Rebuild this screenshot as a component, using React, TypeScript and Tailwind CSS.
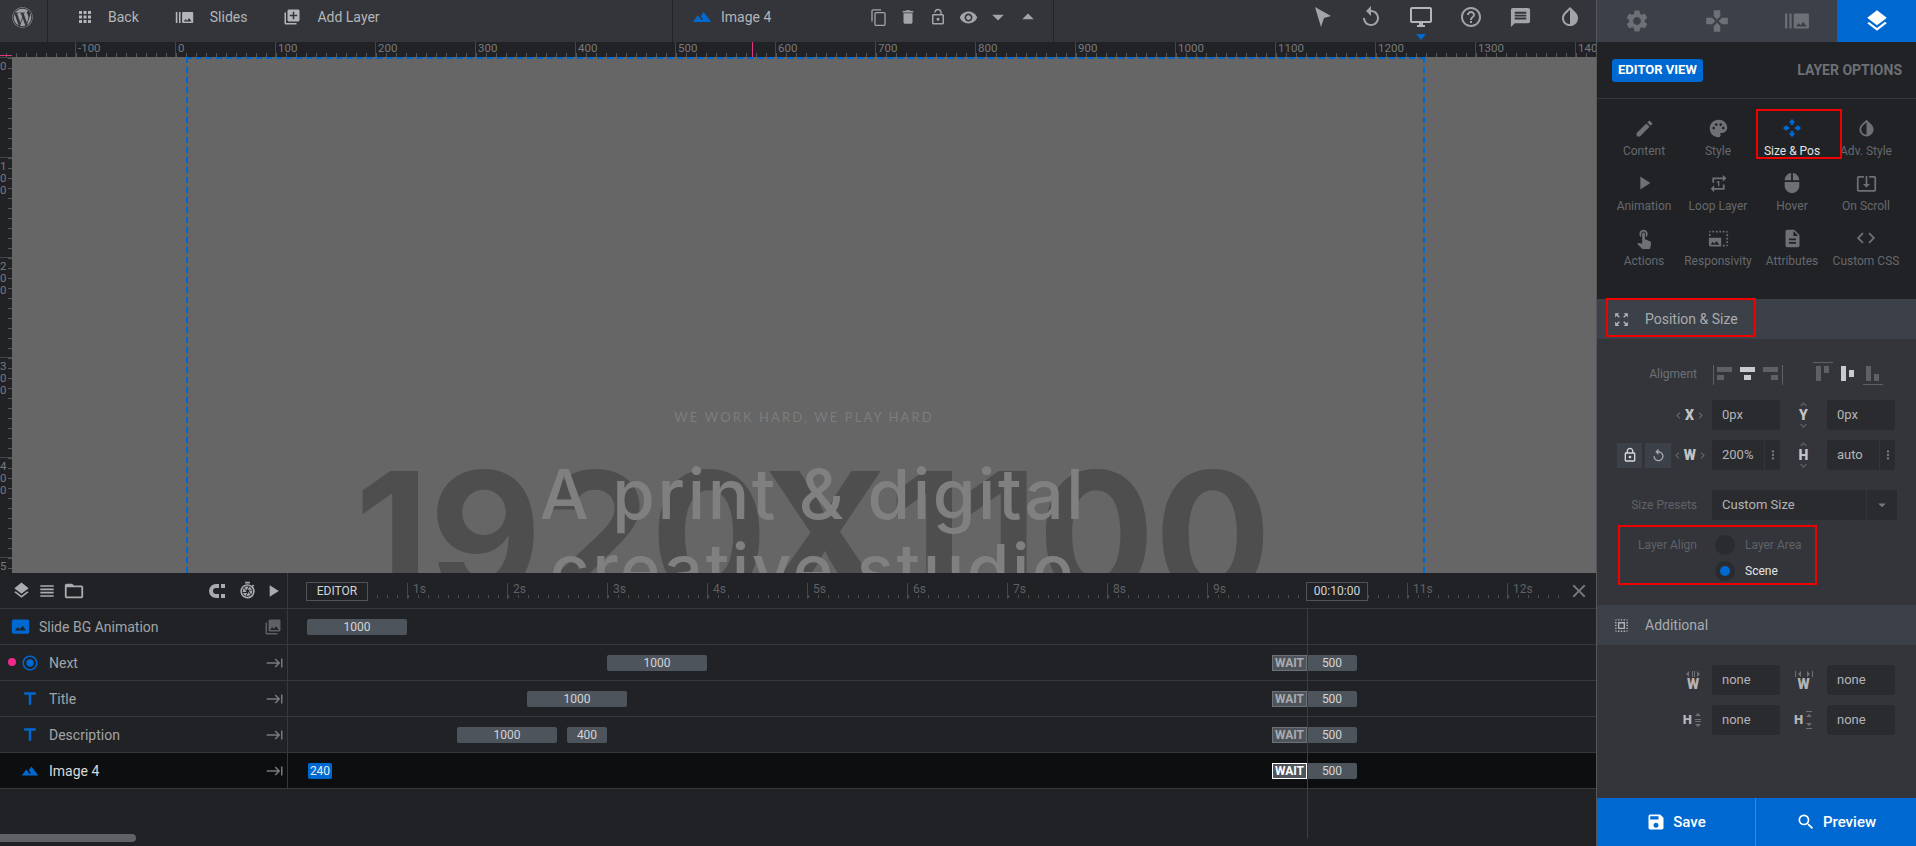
import type { ReactNode } from "react";
import { FaWordpress } from "react-icons/fa";
import {
  MdApps,
  MdBurstMode,
  MdClose,
  MdCode,
  MdDelete,
  MdDescription,
  MdOutlineDesktopWindows,
  MdEdit,
  MdFolderOpen,
  MdGames,
  MdHelpOutline,
  MdInvertColors,
  MdKeyboardArrowDown,
  MdKeyboardArrowLeft,
  MdKeyboardArrowRight,
  MdKeyboardArrowUp,
  MdKeyboardTab,
  MdLandscape,
  MdLayers,
  MdLibraryAdd,
  MdLockOpen,
  MdLockOutline,
  MdMessage,
  MdMouse,
  MdPalette,
  MdPhotoLibrary,
  MdPhotoSizeSelectActual,
  MdPhotoSizeSelectLarge,
  MdPlayArrow,
  MdRadioButtonChecked,
  MdRepeatOne,
  MdReplay,
  MdSave,
  MdSearch,
  MdSelectAll,
  MdSettings,
  MdShutterSpeed,
  MdSystemUpdateAlt,
  MdTitle,
  MdTouchApp,
  MdViewHeadline,
  MdVisibility,
  MdZoomOutMap,
  MdArrowDropDown,
  MdArrowDropUp,
  MdMoreVert,
} from "react-icons/md";

// small hand drawn icons the packs don't have
const CopyIcon = () => (
  <svg width="15" height="17" viewBox="0 0 15 17" fill="none" stroke="currentColor" strokeWidth="1.3">
    <path d="M1 12.5V2a1.2 1.2 0 0 1 1.2-1.2H10" />
    <rect x="4" y="3.6" width="10" height="12.8" rx="1.2" />
  </svg>
);

const CursorIcon = () => (
  <svg width="20" height="24" viewBox="0 0 20 24" fill="currentColor">
    <path d="M2 2 18 11 11 13 8 22Z" />
  </svg>
);

const MagnetIcon = () => (
  <svg width="18" height="16" viewBox="0 0 18 16" fill="currentColor">
    <path d="M8 1h3v4H8a3 3 0 0 0 0 6h3v4H8A7 7 0 0 1 8 1Z" />
    <rect x="13" y="1" width="4" height="4" />
    <rect x="13" y="11" width="4" height="4" />
  </svg>
);

const SizePosIcon = () => (
  <svg width="20" height="20" viewBox="0 0 20 20" fill="currentColor">
    <path d="M10 1 13.5 4.5H11.5V7H8.5V4.5H6.5Z" />
    <path d="M10 19 6.5 15.5H8.5V13H11.5V15.5H13.5Z" />
    <path d="M1 10 4.5 6.5V8.5H7V11.5H4.5V13.5Z" />
    <path d="M19 10 15.5 13.5V11.5H13V8.5H15.5V6.5Z" />
  </svg>
);

const AlignIcons = () => (
  <svg width="70" height="22" viewBox="0 0 70 22" fill="#5d6064">
    <rect x="0" y="2" width="1" height="20" />
    <rect x="4" y="4" width="15" height="5" />
    <rect x="4" y="12" width="7" height="5" />
    <rect x="27" y="4" width="15" height="5" fill="#c9cacc" />
    <rect x="31" y="12" width="7" height="5" fill="#c9cacc" />
    <rect x="50" y="4" width="15" height="5" />
    <rect x="58" y="12" width="7" height="5" />
    <rect x="69" y="2" width="1" height="20" />
  </svg>
);

const VAlignIcons = () => (
  <svg width="70" height="26" viewBox="0 0 70 26" fill="#5d6064">
    <rect x="0" y="0" width="20" height="1" />
    <rect x="3" y="4" width="5" height="15" />
    <rect x="11" y="4" width="5" height="7" />
    <rect x="28" y="4" width="5" height="15" fill="#c9cacc" />
    <rect x="36" y="8" width="5" height="7" fill="#c9cacc" />
    <rect x="53" y="4" width="5" height="15" />
    <rect x="61" y="12" width="5" height="7" />
    <rect x="50" y="22" width="20" height="1" />
  </svg>
);

const WRangeIcon = ({ out }: { out?: boolean }) => (
  <svg width="18" height="8" viewBox="0 0 18 8" fill="#6c6f73">
    {out ? (
      <path d="M0 1h1v6H0ZM3 4l3-3v6ZM15 4l-3-3v6ZM17 1h1v6h-1Z" />
    ) : (
      <path d="M2 4l3-3v6ZM8 1h1v6H8ZM10 1h1v6h-1ZM16 4l-3-3v6Z" />
    )}
  </svg>
);

const HRangeIcon = ({ out }: { out?: boolean }) => (
  <svg width="8" height="18" viewBox="0 0 8 18" fill="#6c6f73">
    {out ? (
      <path d="M1 0h6v1H1ZM4 3l3 3H1ZM4 15l3-3H1ZM1 17h6v1H1Z" />
    ) : (
      <path d="M4 2l3 3H1ZM1 8h6v1H1ZM1 10h6v1H1ZM4 16l3-3H1Z" />
    )}
  </svg>
);

const tabIcons = [MdSettings, MdGames, MdBurstMode];

const layerTools = [
  <CopyIcon key="copy" />,
  <MdDelete key="delete" size={18} />,
  <MdLockOpen key="lock" size={18} />,
  <MdVisibility key="eye" size={19} />,
  <MdArrowDropDown key="down" size={28} />,
  <MdArrowDropUp key="up" size={28} />,
];

const optionItems = [
  { label: "Content", icon: <MdEdit size={21} /> },
  { label: "Style", icon: <MdPalette size={21} /> },
  { label: "Size & Pos", icon: <SizePosIcon />, active: true },
  { label: "Adv. Style", icon: <MdInvertColors size={21} /> },
  { label: "Animation", icon: <MdPlayArrow size={22} /> },
  { label: "Loop Layer", icon: <MdRepeatOne size={21} /> },
  { label: "Hover", icon: <MdMouse size={22} /> },
  { label: "On Scroll", icon: <MdSystemUpdateAlt size={21} /> },
  { label: "Actions", icon: <MdTouchApp size={22} /> },
  { label: "Responsivity", icon: <MdPhotoSizeSelectLarge size={21} /> },
  { label: "Attributes", icon: <MdDescription size={21} /> },
  { label: "Custom CSS", icon: <MdCode size={22} /> },
];

const topRulerLabels = ["", "-100", "0", "100", "200", "300", "400", "500", "600", "700", "800", "900", "1000", "1100", "1200", "1300", "1400"];
const sideRulerLabels = ["0", "100", "200", "300", "400", "500"];
const seconds = ["", "1s", "2s", "3s", "4s", "5s", "6s", "7s", "8s", "9s", "", "11s", "12s"];

const Bar = ({ className, children }: { className: string; children: ReactNode }) => (
  <div className={`h-4 shrink-0 rounded-[2px] bg-[#4e545c] text-center text-[12px] leading-4 text-[#d4d5d7] ${className}`}>
    {children}
  </div>
);

const WaitBar = ({ className, selected }: { className: string; selected?: boolean }) => (
  <div className={`flex h-4 w-[85px] shrink-0 rounded-[2px] bg-[#4e545c] text-[12px] leading-[14px] ${className}`}>
    <div
      className={`w-[35px] border text-center font-bold ${
        selected ? "border-white text-white" : "border-[#6c7178] text-[#a9abae]"
      }`}
    >
      WAIT
    </div>
    <div className="flex-1 text-center leading-4 text-[#d4d5d7]">500</div>
  </div>
);

const layerRows = [
  {
    name: "Slide BG Animation",
    icon: <MdPhotoSizeSelectActual size={19} className="text-[#0069d1]" />,
    lane: <Bar className="ml-[19px] w-[100px]">1000</Bar>,
  },
  {
    name: "Next",
    icon: <MdRadioButtonChecked size={18} className="text-[#0069d1]" />,
    lane: (
      <>
        <Bar className="ml-[319px] w-[100px]">1000</Bar>
        <WaitBar className="ml-[565px]" />
      </>
    ),
  },
  {
    name: "Title",
    icon: <MdTitle size={20} className="text-[#0069d1]" />,
    lane: (
      <>
        <Bar className="ml-[239px] w-[100px]">1000</Bar>
        <WaitBar className="ml-[645px]" />
      </>
    ),
  },
  {
    name: "Description",
    icon: <MdTitle size={20} className="text-[#0069d1]" />,
    lane: (
      <>
        <Bar className="ml-[169px] w-[100px]">1000</Bar>
        <Bar className="ml-[10px] w-[40px]">400</Bar>
        <WaitBar className="ml-[665px]" />
      </>
    ),
  },
  {
    name: "Image 4",
    icon: <MdLandscape size={18} className="text-[#0069d1]" />,
    selected: true,
    lane: (
      <>
        <div className="ml-[20px] h-4 w-6 shrink-0 rounded-[2px] bg-[#0069d1] text-center text-[12px] leading-4 text-[#e8eef6]">
          240
        </div>
        <WaitBar className="ml-[940px]" selected />
      </>
    ),
  },
];

const ValueInput = ({ value, more }: { value: string; more?: boolean }) => (
  <div className="flex h-[30px] w-[68px] items-center rounded-[3px] bg-[#2a2b2f] text-[13px] text-[#b3b4b7]">
    <span className="flex-1 pl-[10px]">{value}</span>
    {more && (
      <span className="flex h-full w-4 items-center justify-center border-l border-[#33353a] text-[#77797d]">
        <MdMoreVert size={14} />
      </span>
    )}
  </div>
);

const AxisX = ({ label }: { label: string }) => (
  <div className="flex items-center text-[#c3c4c6]">
    <MdKeyboardArrowLeft size={13} className="text-[#66686c]" />
    <span className="text-[14px] font-black leading-none">{label}</span>
    <MdKeyboardArrowRight size={13} className="text-[#66686c]" />
  </div>
);

const AxisY = ({ label }: { label: string }) => (
  <div className="flex w-[20px] flex-col items-center text-[#c3c4c6]">
    <MdKeyboardArrowUp size={13} className="-mb-[2px] text-[#66686c]" />
    <span className="text-[14px] font-black leading-[12px]">{label}</span>
    <MdKeyboardArrowDown size={13} className="-mt-[2px] text-[#66686c]" />
  </div>
);

const SectionHead = ({ icon, title }: { icon: ReactNode; title: string }) => (
  <div className="flex h-10 items-center bg-[#3c4048] pl-[16px] text-[14px] text-[#a9abae]">
    <span className="flex w-[32px] text-[#b0b2b5]">{icon}</span>
    {title}
  </div>
);

const App = () => {
  return (
    <div className="relative flex h-[846px] w-[1916px] overflow-hidden bg-[#202225] font-['Roboto',sans-serif]">
      {/* Left: toolbar, rulers, canvas, timeline */}
      <div className="flex w-[1596px] shrink-0 flex-col">
        <header className="flex h-[42px] shrink-0 bg-[#33353a] text-[14px] text-[#b4b5b8]">
          <div className="flex w-[48px] items-center justify-center border-r border-[#222428] pb-[8px] pr-[3px] text-[#9b9da0]">
            <FaWordpress size={21} />
          </div>
          <div className="flex w-[625px] items-center border-r border-[#222428] pb-[8px] pl-[28px]">
            <MdApps size={18} className="text-[#b4b5b8]" />
            <span className="ml-[14px]">Back</span>
            <MdBurstMode size={19} className="ml-[36px]" />
            <span className="ml-[16px]">Slides</span>
            <MdLibraryAdd size={18} className="ml-[36px]" />
            <span className="ml-[16px]">Add Layer</span>
          </div>
          <div className="flex w-[381px] items-center border-r border-[#222428] pb-[8px] pl-[19px] pr-[10px]">
            <MdLandscape size={20} className="text-[#0069d1]" />
            <span className="ml-[9px]">Image 4</span>
            <div className="ml-auto flex items-center text-[#a3a4a7]">
              {layerTools.map((tool) => (
                <span key={tool.key} className="flex w-[30px] justify-center">
                  {tool}
                </span>
              ))}
            </div>
          </div>
          <div className="flex flex-1 items-center justify-end gap-[26px] pb-[8px] pr-[14px] text-[#a3a4a7]">
            <CursorIcon />
            <MdReplay size={24} />
            <div className="relative text-[#b4b5b8]">
              <MdOutlineDesktopWindows size={24} />
              <span className="absolute -bottom-[11px] left-[7px] h-0 w-0 border-x-[5px] border-t-[6px] border-x-transparent border-t-[#0069d1]" />
            </div>
            <MdHelpOutline size={24} />
            <MdMessage size={23} />
            <MdInvertColors size={24} />
          </div>
        </header>

        {/* Top ruler */}
        <div className="flex h-[15px] shrink-0 overflow-hidden bg-[#202225] pl-0">
          <div className="-ml-[25px] flex">
            {topRulerLabels.map((n) => (
              <div
                key={n}
                className="h-[15px] w-[100px] shrink-0 border-l border-[#45474b] bg-[repeating-linear-gradient(90deg,#55575b_0,#55575b_1px,transparent_1px,transparent_10px)] bg-[length:100%_4px] bg-bottom bg-no-repeat pl-[2px] text-[11.5px] leading-[13px] text-[#77797c]"
              >
                {n}
              </div>
            ))}
          </div>
        </div>

        {/* Canvas */}
        <div className="flex h-[516px] shrink-0">
          <div className="flex h-full w-3 shrink-0 flex-col overflow-hidden bg-[#202225]">
            {sideRulerLabels.map((n) => (
              <div
                key={n}
                className="flex h-[100px] w-3 shrink-0 flex-col border-t border-[#45474b] bg-[repeating-linear-gradient(180deg,#55575b_0,#55575b_1px,transparent_1px,transparent_10px)] bg-[length:4px_100%] bg-right bg-no-repeat pt-[2px] text-[11.5px] leading-[12px] text-[#77797c]"
              >
                {n.split("").map((c, i) => (
                  <span key={i}>{c}</span>
                ))}
              </div>
            ))}
          </div>
          <div className="relative flex-1 overflow-hidden bg-[#666666]">
            <div className="absolute left-[174px] top-0 h-full w-[1239px] border-l-2 border-t-2 border-r-2 border-dashed border-[#0069d1]" />
            <div className="absolute left-0 right-0 top-[412px] whitespace-nowrap pl-[18px] text-center font-['Inter',sans-serif] text-[173px] font-bold leading-[130px] text-[#4e4e4e]">
              1920X1100
            </div>
            <div className="absolute left-0 right-0 top-[351px] text-center font-['Lato',sans-serif] text-[13px] tracking-[2.1px] text-[#7d7d7d]">
              WE WORK HARD, WE PLAY HARD
            </div>
            <div className="absolute left-0 right-0 top-[400px] pl-[18px] text-center font-['Inter',sans-serif] text-[69px] font-medium leading-[75px] tracking-[2.6px] text-[#808080]">
              <div>A print &amp; digital</div>
              <div>creative studio</div>
            </div>
          </div>
        </div>

        {/* Timeline */}
        <div className="relative flex flex-1 flex-col bg-[#202225]">
          <div className="flex h-9 shrink-0 border-b border-[#36383c]">
            <div className="flex w-[288px] shrink-0 items-center border-r border-[#36383c] pl-[12px] text-[#a9abae]">
              <MdLayers size={19} />
              <MdViewHeadline size={20} className="ml-[6px]" />
              <MdFolderOpen size={22} className="ml-[6px]" />
              <span className="ml-[123px] flex"><MagnetIcon /></span>
              <MdShutterSpeed size={19} className="ml-[12px]" />
              <MdPlayArrow size={20} className="ml-[6px]" />
            </div>
            <div className="relative flex-1 overflow-hidden">
              <div className="flex w-[1272px] overflow-hidden pl-[19px] pt-[10px]">
                {seconds.map((s, i) => (
                  <div
                    key={i}
                    className={`h-4 w-[100px] shrink-0 bg-[repeating-linear-gradient(90deg,#4b4d51_0,#4b4d51_1px,transparent_1px,transparent_10px)] bg-[length:100%_3px] bg-[position:0_12px] bg-no-repeat pl-[5px] text-[12px] leading-[13px] text-[#5f6165] ${
                      i > 0 ? "border-l border-[#45474b]" : ""
                    }`}
                  >
                    {s}
                  </div>
                ))}
              </div>
              <div className="absolute left-[18px] top-[9px] h-[19px] w-[62px] border border-[#4f5358] bg-[#202225] text-center text-[12px] leading-[17px] text-[#d4d5d7]">
                EDITOR
              </div>
              <div className="absolute left-[1018px] top-[9px] h-[19px] w-[62px] border border-[#4f5358] bg-[#202225] text-center text-[12px] leading-[17px] text-[#d4d5d7]">
                00:10:00
              </div>
              <MdClose size={22} className="absolute right-[6px] top-[7px] text-[#77797c]" />
            </div>
          </div>

          {layerRows.map((row) => (
            <div
              key={row.name}
              className={`flex h-9 shrink-0 border-b border-[#36383c] ${row.selected ? "bg-[#0d0e0f]" : ""}`}
            >
              <div
                className={`relative flex w-[288px] shrink-0 items-center border-r border-[#36383c] pr-[3px] text-[14px] ${
                  row.selected ? "text-[#d8d9da]" : "text-[#a2a4a7]"
                } ${row.name === "Slide BG Animation" ? "pl-[10px]" : "pl-[20px]"}`}
              >
                {row.name === "Next" && (
                  <span className="absolute left-[8px] top-[13px] h-2 w-2 rounded-full bg-[#f0288c]" />
                )}
                <span className="flex w-[20px] justify-center">{row.icon}</span>
                <span className="ml-[9px] flex-1 pt-[1px]">{row.name}</span>
                {row.name === "Slide BG Animation" ? (
                  <MdPhotoLibrary size={18} className="mr-[2px] text-[#5d6064]" />
                ) : (
                  <MdKeyboardTab size={18} className="text-[#77797c]" />
                )}
              </div>
              <div className="flex flex-1 items-center">{row.lane}</div>
            </div>
          ))}

          <div className="absolute left-[1307px] top-[35px] h-[230px] w-px bg-[#3c3e42]" />
          <div className="absolute bottom-[4px] left-0 h-2 w-[136px] rounded-r-full bg-[#5f6165]" />
        </div>
      </div>

      {/* Right: options panel */}
      <aside className="flex w-[320px] shrink-0 flex-col border-l border-[#55575b] bg-[#33353a]">
        <div className="flex h-[42px] shrink-0 bg-[#3c4048]">
          {tabIcons.map((Icon, i) => (
            <div key={i} className="flex w-[80px] items-center justify-center text-[#6d7075]">
              <Icon size={26} />
            </div>
          ))}
          <div className="flex flex-1 items-center justify-center bg-[#0069d1] text-white">
            <MdLayers size={26} />
          </div>
        </div>

        <div className="h-[257px] shrink-0 bg-[#202225]">
          <div className="flex h-[57px] items-center justify-between border-b border-[#36383c] pl-[15px] pr-[14px]">
            <div className="flex h-[23px] items-center rounded-[3px] bg-[#0069d1] px-[6px] text-[13px] font-bold text-white">
              EDITOR VIEW
            </div>
            <div className="text-[14px] font-bold text-[#6d7075]">LAYER OPTIONS</div>
          </div>
          <div className="grid grid-cols-[74px_74px_74px_74px] pl-[10px] pt-[17px]">
            {optionItems.map((item) => (
              <div key={item.label} className="flex h-[55px] flex-col items-center text-[12px]">
                <span className={`flex h-[24px] items-center ${item.active ? "text-[#0069d1]" : "text-[#6d7075]"}`}>
                  {item.icon}
                </span>
                <span className={`mt-[2px] whitespace-nowrap ${item.active ? "text-[#e4e5e6]" : "text-[#66696d]"}`}>
                  {item.label}
                </span>
              </div>
            ))}
          </div>
        </div>

        <SectionHead icon={<MdZoomOutMap size={17} />} title="Position & Size" />
        <div className="h-[266px] shrink-0">
          <div className="mt-[20px] flex h-[30px] items-center">
            <div className="w-[100px] text-right text-[12px] text-[#6d7075]">Aligment</div>
            <div className="ml-[16px]"><AlignIcons /></div>
            <div className="ml-[30px] mt-[2px]"><VAlignIcons /></div>
          </div>
          <div className="mt-[11px] flex h-[30px] items-center">
            <div className="flex w-[115px] justify-end pr-[5px]"><AxisX label="X" /></div>
            <ValueInput value="0px" />
            <div className="flex w-[47px] justify-center"><AxisY label="Y" /></div>
            <ValueInput value="0px" />
          </div>
          <div className="mt-[10px] flex h-[30px] items-center">
            <div className="flex w-[115px] items-center pl-[20px]">
              <span className="flex h-[25px] w-[26px] items-center justify-center bg-[#3c4048] text-[#d8d9da]">
                <MdLockOutline size={16} />
              </span>
              <span className="ml-[3px] flex h-[25px] w-[26px] items-center justify-center bg-[#3c4048] text-[#a9abae]">
                <MdReplay size={15} />
              </span>
              <span className="ml-auto pr-[3px]"><AxisX label="W" /></span>
            </div>
            <ValueInput value="200%" more />
            <div className="flex w-[47px] justify-center"><AxisY label="H" /></div>
            <ValueInput value="auto" more />
          </div>
          <div className="mt-[20px] flex h-[30px] items-center">
            <div className="w-[100px] text-right text-[12px] text-[#5f6266]">Size Presets</div>
            <div className="ml-[15px] flex h-[30px] w-[185px] items-center rounded-l-[3px] bg-[#2a2b2f] text-[13px] text-[#b3b4b7]">
              <span className="flex-1 pl-[10px]">Custom Size</span>
              <span className="flex h-full w-[31px] items-center justify-center border-l border-[#33353a] text-[#77797d]">
                <MdArrowDropDown size={18} />
              </span>
            </div>
          </div>
          <div className="mt-[15px] flex items-center">
            <div className="w-[100px] text-right text-[12px] text-[#5f6266]">Layer Align</div>
            <div className="ml-[18px] flex h-5 w-5 rounded-full bg-[#2a2b2f]" />
            <div className="ml-[10px] text-[12px] text-[#5f6266]">Layer Area</div>
          </div>
          <div className="mt-[6px] flex items-center pl-[118px]">
            <div className="flex h-5 w-5 items-center justify-center rounded-full bg-[#2a2b2f]">
              <span className="h-[10px] w-[10px] rounded-full bg-[#0069d1]" />
            </div>
            <div className="ml-[10px] text-[12px] text-[#e4e5e6]">Scene</div>
          </div>
        </div>

        <SectionHead icon={<MdSelectAll size={17} />} title="Additional" />
        <div className="flex-1">
          <div className="mt-[20px] flex h-[30px] items-center">
            <div className="flex w-[115px] justify-end pr-[10px]">
              <div className="flex flex-col items-center text-[14px] font-black leading-[12px] text-[#b3b4b7]">
                <WRangeIcon />W
              </div>
            </div>
            <ValueInput value="none" />
            <div className="flex w-[47px] justify-center">
              <div className="flex flex-col items-center text-[14px] font-black leading-[12px] text-[#b3b4b7]">
                <WRangeIcon out />W
              </div>
            </div>
            <ValueInput value="none" />
          </div>
          <div className="mt-[10px] flex h-[30px] items-center">
            <div className="flex w-[115px] justify-end pr-[10px]">
              <div className="flex items-center gap-[2px] text-[13px] font-black text-[#b3b4b7]">
                H<HRangeIcon />
              </div>
            </div>
            <ValueInput value="none" />
            <div className="flex w-[47px] justify-center">
              <div className="flex items-center gap-[2px] text-[13px] font-black text-[#b3b4b7]">
                H<HRangeIcon out />
              </div>
            </div>
            <ValueInput value="none" />
          </div>
        </div>

        <div className="flex h-12 shrink-0 bg-[#0069d1] text-[15px] font-medium text-white">
          <div className="flex w-[159px] items-center justify-center gap-[7px] border-r border-[#3388dc]">
            <MdSave size={20} />
            Save
          </div>
          <div className="flex flex-1 items-center justify-center gap-[7px]">
            <MdSearch size={20} />
            Preview
          </div>
        </div>
      </aside>

      {/* Red annotation boxes over the screenshot */}
      <div className="pointer-events-none absolute left-[1756px] top-[109px] h-[50px] w-[86px] border-2 border-[#f00000]" />
      <div className="pointer-events-none absolute left-[1606px] top-[298px] h-[39px] w-[150px] border-2 border-[#f00000]" />
      <div className="pointer-events-none absolute left-[1618px] top-[525px] h-[60px] w-[199px] border-2 border-[#f00000]" />

      {/* Ruler markers */}
      <div className="pointer-events-none absolute left-0 top-[55px] h-px w-3 bg-[#e0357f]" />
      <div className="pointer-events-none absolute left-[752px] top-[42px] h-[15px] w-px bg-[#e0357f]" />
    </div>
  );
};

export default App;
